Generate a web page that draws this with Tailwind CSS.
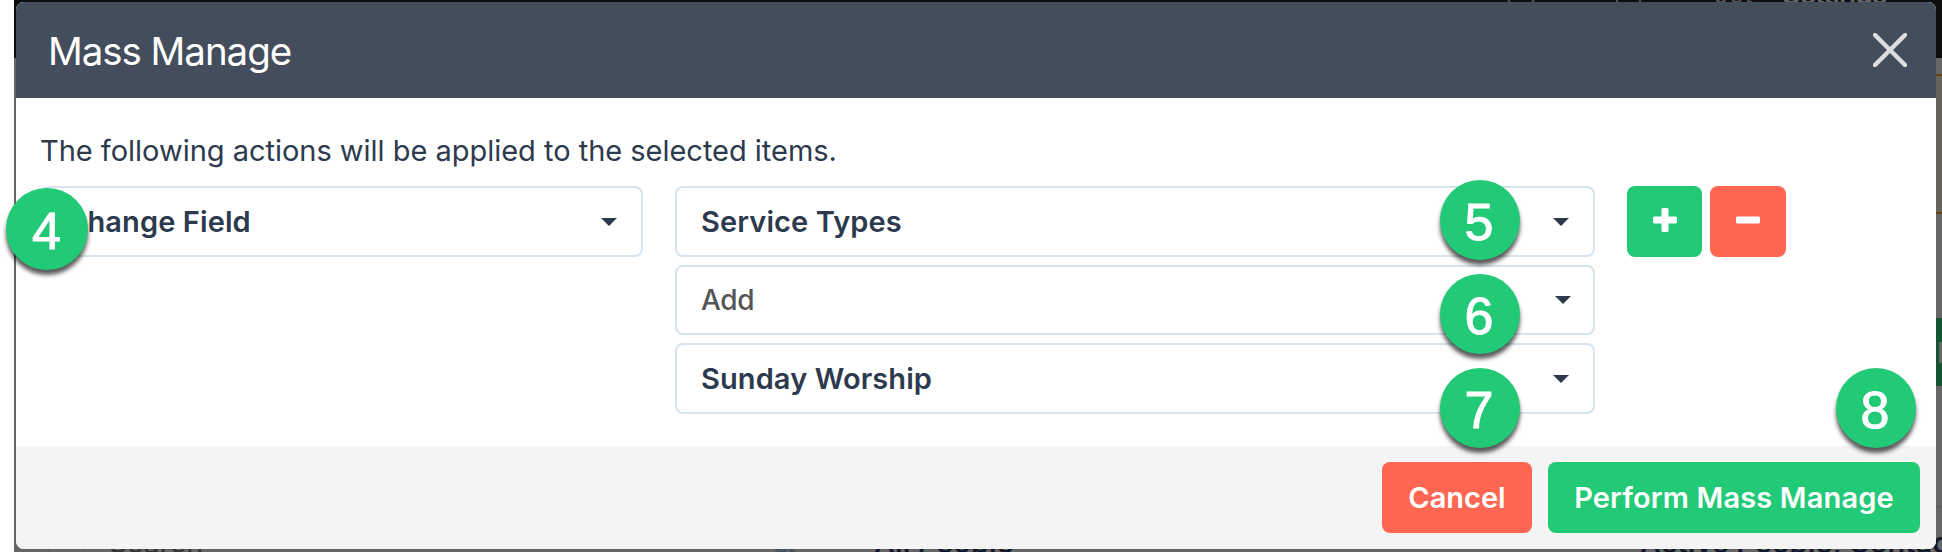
<!DOCTYPE html>
<html lang="en">
    <head>
        <meta charset="UTF-8">
        <meta name="viewport" content="width=device-width, initial-scale=1.0">
        <title>Mass Manage</title>
        <script src="https://cdn.jsdelivr.net/npm/@tailwindcss/browser@4"></script>
    </head>
    <body class="relative w-[1942px] h-[552px] overflow-hidden bg-white font-['Inter',sans-serif] text-[#2d3a4d]">

        <!-- dimmed page behind the dialog -->
        <div class="absolute inset-y-0 left-[14px] right-0 overflow-hidden bg-[#666666]">
            <div class="h-[58px] bg-[#0e0e0e]"></div>
            <div class="ml-auto mt-4 w-[100px] h-[140px] border-y-2 border-[#6b4410] bg-[#66625c]"></div>
            <div class="absolute right-0 top-[318px] w-[6px] h-[68px] bg-[#145430]"></div>
            <div class="absolute right-0 top-[342px] w-[3px] h-[21px] bg-[#666666]"></div>
            <div class="absolute right-0 top-[506px] w-[6px] h-[2px] bg-[#5a6066]"></div>
            <svg class="absolute left-[1494px] top-0 w-[140px] h-[2px]" viewBox="0 0 140 2" fill="none" stroke="#555555" stroke-width="2">
                <path d="M0 0l2 2M26 0l-2 2M109 0v2M132 0v2"/>
            </svg>
            <span class="absolute left-[1700px] top-[-24px] text-[26px] leading-[36px] text-[#555555]">Jot</span>
            <span class="absolute left-[1768px] top-[-24px] text-[28px] leading-[36px] font-semibold tracking-[-0.8px] text-[#666666]">Settings</span>
            <div class="absolute bottom-0 left-[34px] w-9 h-3 border-x-2 border-[#586066]"></div>
            <div class="absolute bottom-0 left-[801px] w-9 h-3 border-x-2 border-[#5d6166]"></div>
            <div class="absolute bottom-0 left-[1567px] w-9 h-3 border-x-2 border-[#5d6166]"></div>
            <svg class="absolute bottom-0 left-[760px] w-6 h-[3px]" viewBox="0 0 24 3" fill="none" stroke="#44525a" stroke-width="3"><path d="M1 0q6 3 12 1M15 0l6 3"/></svg>
            <span class="absolute left-[95px] top-[525px] text-[28px] leading-[36px] font-medium text-[#333333]">Search</span>
            <span class="absolute left-[860px] top-[525px] text-[29px] leading-[36px] font-semibold text-[#12172a]">All People</span>
            <span class="absolute left-[1626px] top-[525px] text-[29px] leading-[36px] font-semibold text-[#12172a] whitespace-nowrap">Active People, Contacts</span>
        </div>

        <!-- dialog -->
        <div class="relative ml-4 mt-[2px] w-[1920px] h-[547px] flex flex-col overflow-hidden rounded-lg bg-white">
            <div class="flex items-center justify-between h-24 pl-8 pr-[29px] bg-[#444d5c] text-white">
                <h1 class="pt-[2px] text-[38.5px] leading-none tracking-[-1.05px]">Mass Manage</h1>
                <button aria-label="Close">
                    <svg class="w-[34px] h-[34px]" viewBox="0 0 34 34" fill="none" stroke="#dcdee0" stroke-width="4.4" stroke-linecap="round">
                        <path d="M2 2l30 30M32 2L2 32"/>
                    </svg>
                </button>
            </div>

            <div class="grow px-6 pt-[35px]">
                <p class="h-[53px] text-[29px] leading-9 tracking-[-0.02px]">The following actions will be applied to the selected items.</p>
                <div class="flex items-start text-[29px] font-semibold tracking-[0.1px]">
                    <button class="flex items-center justify-between w-[603px] h-[71px] pl-6 pr-6 border-2 border-[#d7e3ed] rounded-lg">
                        <span>Change Field</span>
                        <svg class="w-4 h-2" viewBox="0 0 16 8" fill="#2d3a4d"><path d="M0 0h16L8 8z"/></svg>
                    </button>
                    <div class="flex flex-col gap-2 w-[920px] ml-8">
                        <button class="flex items-center justify-between h-[71px] pl-6 pr-6 border-2 border-[#d7e3ed] rounded-lg">
                            <span>Service Types</span>
                            <svg class="w-4 h-2" viewBox="0 0 16 8" fill="#2d3a4d"><path d="M0 0h16L8 8z"/></svg>
                        </button>
                        <button class="flex items-center justify-between h-[70px] pl-6 pr-[22px] border-2 border-[#d7e3ed] rounded-lg">
                            <span class="text-[28px] font-medium tracking-[-0.3px] text-[#555555]">Add</span>
                            <svg class="w-4 h-2" viewBox="0 0 16 8" fill="#2d3a4d"><path d="M0 0h16L8 8z"/></svg>
                        </button>
                        <button class="flex items-center justify-between h-[71px] pl-6 pr-6 border-2 border-[#d7e3ed] rounded-lg">
                            <span>Sunday Worship</span>
                            <svg class="w-4 h-2" viewBox="0 0 16 8" fill="#2d3a4d"><path d="M0 0h16L8 8z"/></svg>
                        </button>
                    </div>
                    <div class="flex gap-2 ml-8">
                        <button aria-label="Add action" class="flex justify-center w-[75px] h-[71px] pt-[22px] rounded-lg bg-[#22c977]">
                            <svg class="w-6 h-6" viewBox="0 0 24 24" fill="white"><rect y="8.5" width="24" height="7" rx="1.5"/><rect x="8.5" width="7" height="24" rx="1.5"/></svg>
                        </button>
                        <button aria-label="Remove action" class="flex justify-center w-[76px] h-[71px] pt-[22px] rounded-lg bg-[#ff6752]">
                            <svg class="w-6 h-6" viewBox="0 0 24 24" fill="white"><rect y="8.5" width="24" height="7" rx="1.5"/></svg>
                        </button>
                    </div>
                </div>
            </div>

            <div class="flex items-center justify-end gap-4 h-[103px] pr-4 bg-[#f4f4f4] text-[29px] font-semibold text-white">
                <button class="w-[150px] h-[71px] pt-px rounded-lg bg-[#ff6752]">Cancel</button>
                <button class="w-[372px] h-[71px] pt-px rounded-lg bg-[#22c977] tracking-[0.15px]">Perform Mass Manage</button>
            </div>
        </div>

        <!-- numbered step markers -->
        <div class="font-['Liberation_Sans',sans-serif] text-[52px] leading-none text-white">
            <div class="absolute left-[6px] top-[188px] flex items-center justify-center size-[82px] pt-[3px] pr-px rounded-full bg-[#22c977] shadow-[0_5px_4px_rgba(0,0,0,0.65)] [-webkit-text-stroke:1px_white]">4</div>
            <div class="absolute left-[1440px] top-[180px] flex items-center justify-center size-20 pt-[3px] pr-[2px] rounded-full bg-[#22c977] shadow-[0_5px_4px_rgba(0,0,0,0.65)] [-webkit-text-stroke:1px_white]">5</div>
            <div class="absolute left-[1440px] top-[274px] flex items-center justify-center size-20 pt-[3px] pr-[2px] rounded-full bg-[#22c977] shadow-[0_5px_4px_rgba(0,0,0,0.65)] [-webkit-text-stroke:1px_white]">6</div>
            <div class="absolute left-[1440px] top-[368px] flex items-center justify-center size-20 pt-[3px] pr-[2px] rounded-full bg-[#22c977] shadow-[0_5px_4px_rgba(0,0,0,0.65)] [-webkit-text-stroke:1px_white]">7</div>
            <div class="absolute left-[1836px] top-[368px] flex items-center justify-center size-20 pt-[3px] pr-[2px] rounded-full bg-[#22c977] shadow-[0_5px_4px_rgba(0,0,0,0.65)] [-webkit-text-stroke:1px_white]">8</div>
        </div>
    </body>
</html>
